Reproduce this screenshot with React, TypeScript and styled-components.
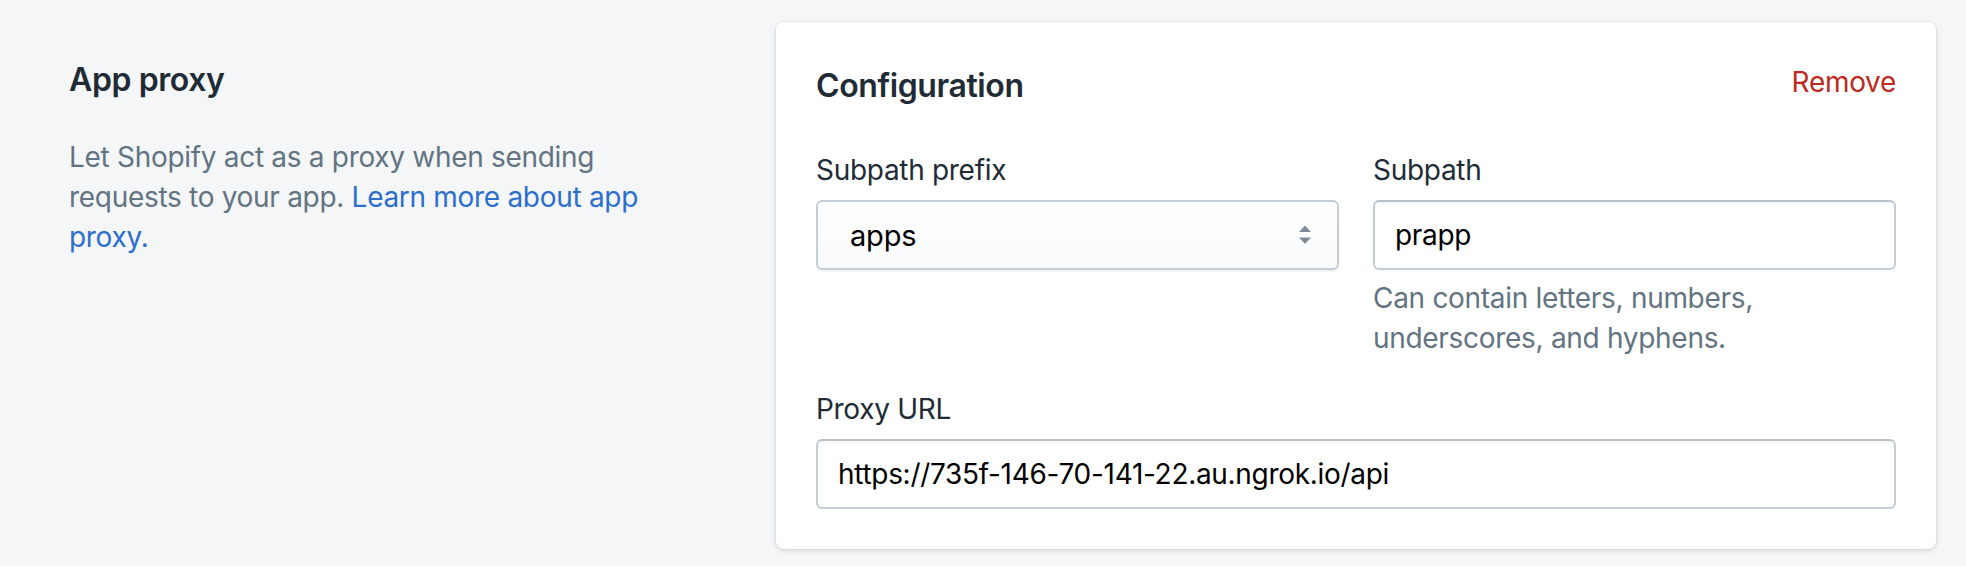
import React, { FC } from 'react'
import styled, { createGlobalStyle } from 'styled-components'

const GlobalStyle = createGlobalStyle`
  html, body {
    margin: 0;
    padding: 0;
    background: #f4f6f8;
    font-family: Inter, "Noto Sans", "Liberation Sans", sans-serif;
    -webkit-font-smoothing: antialiased;
  }
  * {
    box-sizing: border-box;
  }
`

const SelectArrows: FC = () => (
  <svg width="14" height="20" viewBox="0 0 14 20" aria-hidden="true">
    <polygon points="1,7 7,0.5 13,7" fill="#7f8c98" />
    <polygon points="1,12.5 13,12.5 7,19" fill="#7f8c98" />
  </svg>
)

const App: FC = () => {
  return (
    <>
      <GlobalStyle />
      <Page>
        <Aside>
          <SectionTitle>App proxy</SectionTitle>
          <Description>
            Let Shopify act as a proxy when sending requests to your app.{' '}
            <Link href="#">Learn more about app proxy.</Link>
          </Description>
        </Aside>
        <Card>
          <CardHeader>
            <CardTitle>Configuration</CardTitle>
            <RemoveButton type="button">Remove</RemoveButton>
          </CardHeader>
          <FormGroup>
            <Field>
              <Label>Subpath prefix</Label>
              <SelectBox>
                <SelectValue>apps</SelectValue>
                <SelectArrows />
              </SelectBox>
            </Field>
            <Field>
              <Label>Subpath</Label>
              <TextInput value="prapp" readOnly />
              <HelpText>Can contain letters, numbers, underscores, and hyphens.</HelpText>
            </Field>
          </FormGroup>
          <FullField>
            <Label>Proxy URL</Label>
            <TextInput value="https://735f-146-70-141-22.au.ngrok.io/api" readOnly />
          </FullField>
        </Card>
      </Page>
    </>
  )
}

export default App

const Page = styled.div`
  display: flex;
  align-items: flex-start;
  padding: 22px 30px 16px 69px;
`

const Aside = styled.div`
  width: 600px;
  padding-top: 34px;
`

const SectionTitle = styled.h2`
  margin: 0;
  font-size: 32px;
  line-height: 48px;
  font-weight: 600;
  letter-spacing: -0.4px;
  color: #212b36;
`

const Description = styled.p`
  margin: 33px 0 0;
  font-size: 28px;
  line-height: 40px;
  letter-spacing: -0.3px;
  color: #637381;
`

const Link = styled.a`
  color: #2c6ecb;
  text-decoration: none;
`

const Card = styled.div`
  margin-left: auto;
  width: 1160px;
  padding: 40px;
  background: #ffffff;
  border-radius: 8px;
  box-shadow: 0 0 0 1px rgba(63, 63, 68, 0.05), 0 2px 5px 0 rgba(63, 63, 68, 0.15);
`

const CardHeader = styled.div`
  display: flex;
  justify-content: space-between;
  align-items: flex-start;
`

const CardTitle = styled.h3`
  margin: 0;
  font-size: 32px;
  line-height: 48px;
  font-weight: 600;
  letter-spacing: -0.4px;
  color: #212b36;
`

const RemoveButton = styled.button`
  padding: 0;
  border: none;
  background: none;
  font-family: inherit;
  font-size: 28px;
  line-height: 40px;
  letter-spacing: -0.3px;
  color: #bc2a21;
  cursor: pointer;
`

const FormGroup = styled.div`
  display: grid;
  grid-template-columns: 1fr 1fr;
  column-gap: 34px;
  margin-top: 40px;
`

const Field = styled.div`
  display: flex;
  flex-direction: column;
`

const FullField = styled(Field)`
  margin-top: 31px;
`

const Label = styled.label`
  font-size: 28px;
  line-height: 40px;
  letter-spacing: -0.3px;
  color: #212b36;
  margin-bottom: 10px;
`

const SelectBox = styled.div`
  display: flex;
  align-items: center;
  justify-content: space-between;
  height: 70px;
  padding: 0 25px 0 32px;
  border: 2px solid #c4cdd5;
  border-radius: 6px;
  background: linear-gradient(180deg, #ffffff, #f9fafb);
  box-shadow: 0 2px 0 0 rgba(22, 29, 37, 0.05);
`

const SelectValue = styled.span`
  font-size: 29px;
  letter-spacing: -0.2px;
  color: #000000;
`

const TextInput = styled.input`
  width: 100%;
  height: 70px;
  padding: 0 20px;
  border: 2px solid #c4cdd5;
  border-top-color: #b9c1c9;
  border-radius: 6px;
  background: #ffffff;
  box-shadow: inset 0 2px 0 0 rgba(99, 115, 129, 0.05);
  font-family: inherit;
  font-size: 28px;
  letter-spacing: -0.3px;
  color: #000000;
  outline: none;
`

const HelpText = styled.div`
  margin-top: 8px;
  font-size: 28px;
  line-height: 40px;
  letter-spacing: -0.3px;
  color: #637381;
`
